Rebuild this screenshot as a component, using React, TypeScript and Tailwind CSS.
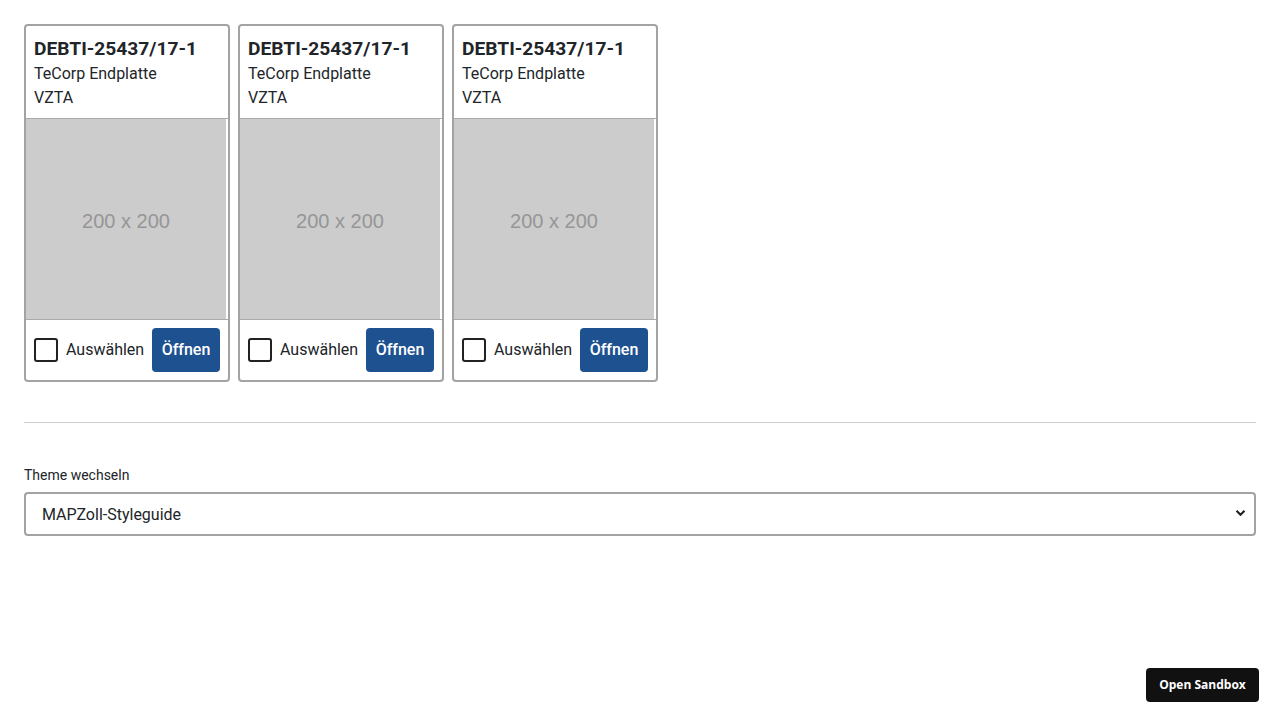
import React from "react";

function Card() {
  return (
    <div className="w-[206px] border-2 border-[#a3a3a3] rounded-[4px] bg-white flex flex-col">
      <div className="px-2 pt-[9px] pb-[8px] border-b border-[#aaaaaa] text-[#212529]">
        <div className="text-[19.2px] leading-[27px] font-bold">DEBTI-25437/17-1</div>
        <div className="text-[16px] leading-[24px]">TeCorp Endplatte</div>
        <div className="text-[16px] leading-[24px]">VZTA</div>
      </div>
      <div
        className="w-[200px] h-[200px] bg-[#cccccc] flex items-center justify-center text-[20px] text-[#969696]"
        style={{ fontFamily: '"Liberation Sans", Arial, sans-serif' }}
      >
        <span className="mt-[3px]">200 x 200</span>
      </div>
      <div className="border-t border-[#aaaaaa] h-[61px] px-2 flex items-center justify-between">
        <label className="flex items-center gap-2 text-[16px] text-[#212529]">
          <span className="w-6 h-6 border-2 border-[#222] rounded-[3px] bg-white" />
          Auswählen
        </label>
        <button className="h-11 w-[68px] rounded-[4px] bg-[#1e5190] text-white text-[16px] font-medium">
          Öffnen
        </button>
      </div>
    </div>
  );
}

export default function App() {
  return (
    <div
      className="min-h-[720px] bg-white p-6"
      style={{ fontFamily: 'Roboto, "Noto Sans", sans-serif' }}
    >
      <div className="flex gap-2">
        <Card />
        <Card />
        <Card />
      </div>
      <hr className="mt-10 border-0 border-t border-[#cccccc]" />
      <div className="mt-[42px] text-[14px] leading-[20px] text-[#212529]">Theme wechseln</div>
      <div className="relative mt-[7px]">
        <select className="w-full h-11 appearance-none border-2 border-[#a3a3a3] rounded-[4px] bg-white pl-4 pt-[2px] text-[16px] text-[#212529] outline-none">
          <option>MAPZoll-Styleguide</option>
        </select>
        <svg
          className="absolute right-[10px] top-[17px] pointer-events-none"
          width="11"
          height="8"
          viewBox="0 0 11 8"
        >
          <path d="M1.5 1.8 L5.5 5.8 L9.5 1.8" stroke="#222" strokeWidth="2.2" fill="none" />
        </svg>
      </div>
      <button
        className="fixed right-[21px] bottom-[18px] w-[113px] h-[34px] rounded-[4px] bg-[#111111] text-white text-[12px] font-bold"
        style={{ fontFamily: '"Open Sans", sans-serif' }}
      >
        Open Sandbox
      </button>
    </div>
  );
}
